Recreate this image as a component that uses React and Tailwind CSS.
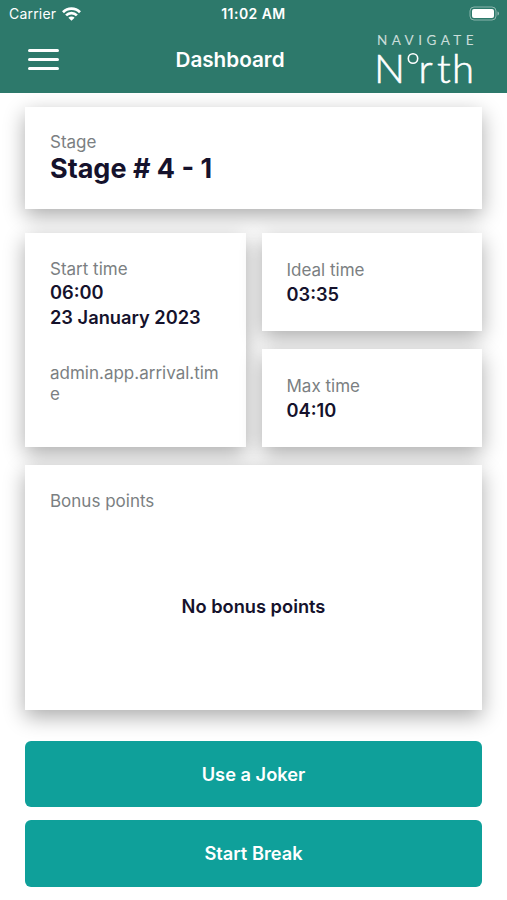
import React from 'react';

const StatusBar = () => (
  <div className="grid grid-cols-3 items-center h-[27px] pl-[9px] pr-[7px] text-white">
    <div className="flex items-center gap-[6px] text-[14px] tracking-[0.2px]">
      <span>Carrier</span>
      <svg className="w-[19px] h-[14px]" viewBox="0 0 19 14" fill="none" stroke="white" strokeWidth="2.7">
        <path d="M1 5.2a12 12 0 0 1 17 0" />
        <path d="M4.1 8.4a7.6 7.6 0 0 1 10.8 0" />
        <path d="M9.5 13.8 6.4 10.7a4.4 4.4 0 0 1 6.2 0Z" fill="white" stroke="none" />
      </svg>
    </div>
    <span className="pr-[2px] text-center text-[14px] font-semibold tracking-[0.45px]">11:02 AM</span>
    <svg className="w-[31px] h-[15px] justify-self-end" viewBox="0 0 31 15" fill="none">
      <rect x="1" y="1" width="26" height="13" rx="4" stroke="white" strokeOpacity="0.45" />
      <rect x="3" y="3" width="22" height="9" rx="2" fill="white" />
      <path d="M28.5 5.5v4c1-.4 1.5-1.2 1.5-2s-.5-1.6-1.5-2Z" fill="white" fillOpacity="0.5" />
    </svg>
  </div>
);

const Logo = () => (
  <svg className="w-[100px] h-[54px] overflow-visible font-['Lato',sans-serif]" viewBox="0 0 100 54" fill="white">
    <text x="2" y="12" fontSize="13.5" fontWeight="400" textLength="96.5" opacity="0.75">NAVIGATE</text>
    <g fontSize="40" fontWeight="300" stroke="white" strokeWidth="0.6">
      <text x="-1" y="49.5" textLength="31" lengthAdjust="spacingAndGlyphs">N</text>
      <text x="43.5" y="49.5">r</text>
      <text x="62" y="49.5">t</text>
      <text x="77" y="49.5">h</text>
    </g>
    <circle cx="38" cy="25.5" r="4.7" fill="none" stroke="white" strokeWidth="1.6" />
  </svg>
);

const Header = () => (
  <header className="relative z-10 h-[92.5px] bg-[#2d796b]">
    <StatusBar />
    <div className="flex items-center justify-between h-[65px] pl-7 pr-[32px]">
      <button className="flex flex-col gap-[6px] w-[31px]" aria-label="Menu">
        <span className="h-[3px] w-full rounded-full bg-white"></span>
        <span className="h-[3px] w-full rounded-full bg-white"></span>
        <span className="h-[3px] w-full rounded-full bg-white"></span>
      </button>
      <h1 className="pl-[26px] text-[20.7px] font-semibold text-white">Dashboard</h1>
      <Logo />
    </div>
  </header>
);

const Card = ({ className = '', children }) => (
  <section className={`bg-white px-[25px] shadow-[0_7px_20px_rgba(0,0,0,0.33)] ${className}`}>
    {children}
  </section>
);

const Label = ({ children }) => (
  <p className="text-[17px] leading-[21px] text-[#7b7f82] break-all">{children}</p>
);

const Value = ({ children }) => (
  <p className="text-[18.25px] leading-[25px] font-semibold text-[#15122c]">{children}</p>
);

const ActionButton = ({ children }) => (
  <button className="h-[66.5px] rounded-md bg-[#0fa09a] pt-px text-[18.25px] font-semibold text-white">
    {children}
  </button>
);

export default function App() {
  return (
    <div className="h-[900px] overflow-hidden bg-white font-['Inter',sans-serif]">
      <Header />

      <main className="flex flex-col px-[25px] pt-[14.5px]">
        <Card className="h-[102px] pt-[25px]">
          <Label>Stage</Label>
          <h2 className="text-[27px] leading-[32px] font-bold text-[#15122c]">Stage # 4 - 1</h2>
        </Card>

        <div className="grid grid-cols-2 gap-4 mt-6 h-[214px]">
          <Card className="pt-[26px]">
            <Label>Start time</Label>
            <Value>06:00</Value>
            <Value>23 January 2023</Value>
            <div className="mt-[33px]">
              <Label>admin.app.arrival.time</Label>
            </div>
          </Card>
          <div className="flex flex-col gap-[18px]">
            <Card className="flex-1 pt-[27px]">
              <Label>Ideal time</Label>
              <div className="pt-px">
                <Value>03:35</Value>
              </div>
            </Card>
            <Card className="flex-1 pt-[27px]">
              <Label>Max time</Label>
              <div className="pt-px">
                <Value>04:10</Value>
              </div>
            </Card>
          </div>
        </div>

        <Card className="mt-[18px] h-[245px] pt-[26px]">
          <Label>Bonus points</Label>
          <div className="mt-[82px] text-center">
            <Value>No bonus points</Value>
          </div>
        </Card>

        <div className="relative flex flex-col gap-[13px] mt-[30.5px]">
          <ActionButton>Use a Joker</ActionButton>
          <ActionButton>Start Break</ActionButton>
        </div>
      </main>
    </div>
  );
}
